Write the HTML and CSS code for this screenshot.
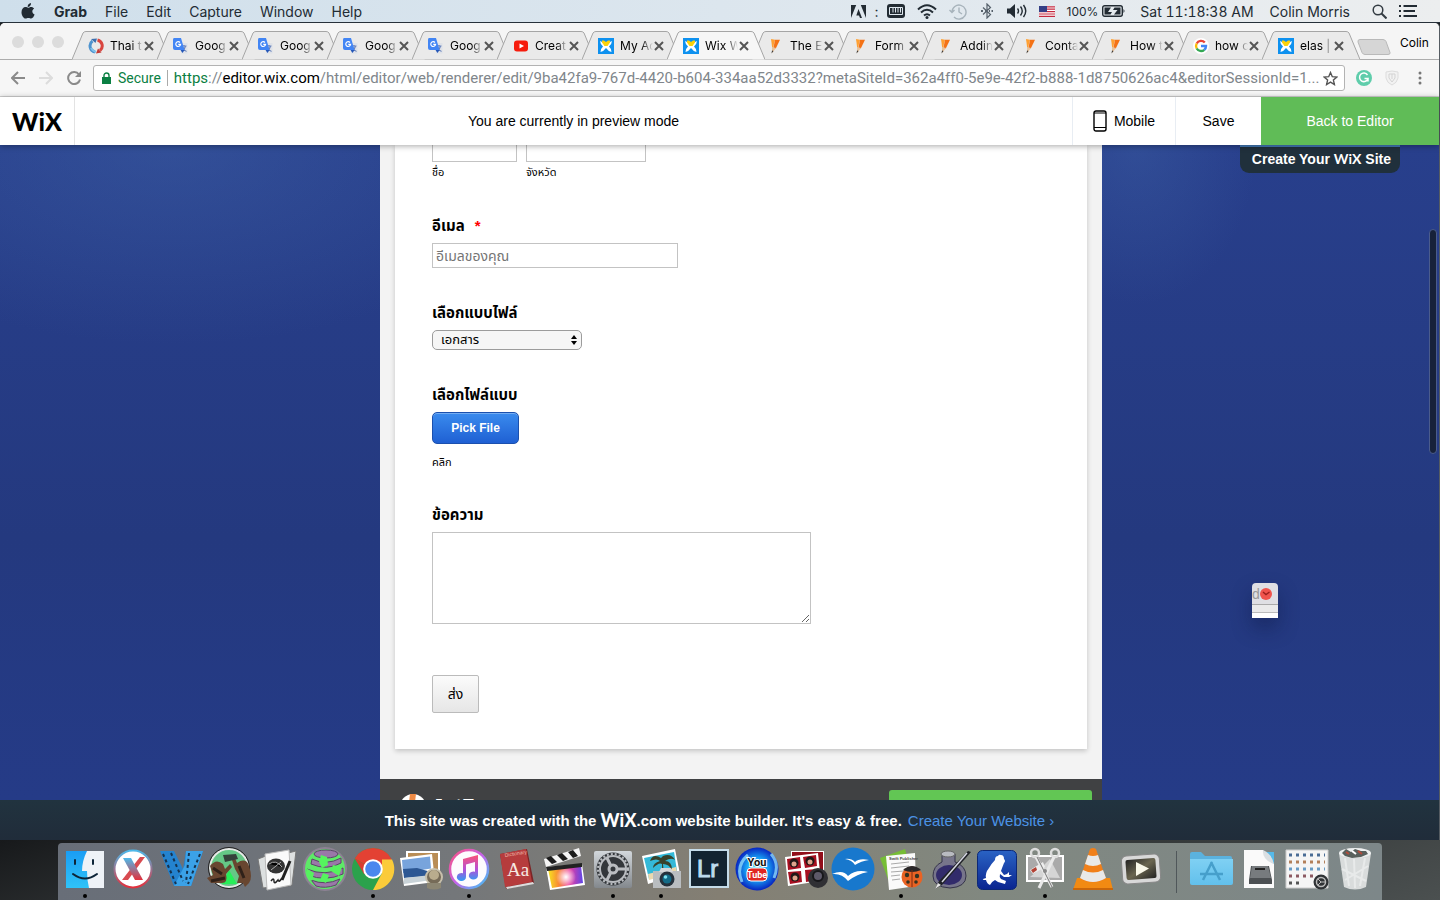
FILE: index.html
```html
<!DOCTYPE html>
<html lang="en">
<head>
<meta charset="utf-8">
<title>Wix Website Editor</title>
<link rel="stylesheet" href="styles.css">
</head>
<body>
<svg class="defs" aria-hidden="true">
  <defs>
    <linearGradient id="gBlue" x1="0" y1="0" x2="0" y2="1"><stop offset="0" stop-color="#1a9df4"/><stop offset="1" stop-color="#2fc3f8"/></linearGradient>
    <linearGradient id="gX" x1="0" y1="0" x2="0" y2="1"><stop offset="0" stop-color="#4db9ea"/><stop offset="1" stop-color="#e3303c"/></linearGradient>
    <linearGradient id="gNote" x1="0" y1="0" x2="0" y2="1"><stop offset="0" stop-color="#fb5475"/><stop offset=".55" stop-color="#b54fd8"/><stop offset="1" stop-color="#2f9df5"/></linearGradient>
    <linearGradient id="gRing" x1="0" y1="0" x2="1" y2="1"><stop offset="0" stop-color="#fb4f7e"/><stop offset=".5" stop-color="#c564ea"/><stop offset="1" stop-color="#35c9f5"/></linearGradient>
    <linearGradient id="gRain" x1="0" y1="0" x2="1" y2="0"><stop offset="0" stop-color="#f7e51f"/><stop offset=".3" stop-color="#f98b35"/><stop offset=".6" stop-color="#ee3e9c"/><stop offset="1" stop-color="#5d46e8"/></linearGradient>
    <radialGradient id="gGlow"><stop offset="0" stop-color="#fff"/><stop offset="1" stop-color="#fff" stop-opacity="0"/></radialGradient>
    <linearGradient id="gMetal" x1="0" y1="0" x2="0" y2="1"><stop offset="0" stop-color="#d3d8dc"/><stop offset="1" stop-color="#83888d"/></linearGradient>
    <radialGradient id="gTube"><stop offset="0" stop-color="#6ff0ff"/><stop offset=".5" stop-color="#18a3f5"/><stop offset="1" stop-color="#0724c0"/></radialGradient>
    <linearGradient id="gFolder" x1="0" y1="0" x2="0" y2="1"><stop offset="0" stop-color="#7fd0f3"/><stop offset="1" stop-color="#62c0ec"/></linearGradient>
    <linearGradient id="gFrog" x1="0" y1="0" x2="0" y2="1"><stop offset="0" stop-color="#2a63c4"/><stop offset="1" stop-color="#0a2590"/></linearGradient>
    <linearGradient id="gPlay" x1="0" y1="0" x2="1" y2="1"><stop offset="0" stop-color="#222"/><stop offset=".5" stop-color="#6b6650"/><stop offset="1" stop-color="#222"/></linearGradient>
    <symbol id="shape" viewBox="0 0 98 29"><path d="M0 28.500L11 2Q12 .5 14 .5H84Q86 .5 87 2L98 28.500"/></symbol>
    <symbol id="close" viewBox="0 0 10 10"><path d="M1 1l8 8M9 1L1 9" stroke="#555" stroke-width="2" fill="none"/></symbol>
    <symbol id="f-translate" viewBox="0 0 16 16"><path d="M8 5h6.500v10.500H8z" fill="#dfe2e8"/><path d="M8.500 8h5M11 7v1.500M12.500 8q-1 4-3.500 5.500M10 9.500q1 3 3.500 4" stroke="#6883bd" stroke-width="1.200" fill="none"/><path d="M1 0h7l3.500 12H2Q0 12 0 10V1.500Q0 0 1 0z" fill="#4285f4"/><path d="M7.500 12h4l-2 3z" fill="#2457b8"/><path d="M7 4.500A2.400 2.400 0 1 0 7.600 6.300H5.300" stroke="#fff" stroke-width="1.200" fill="none"/></symbol>
    <symbol id="f-thai" viewBox="0 0 16 16"><path d="M9.500 2A6 6 0 0 1 12 12.500" stroke="#d9453f" stroke-width="3" fill="none"/><path d="M7 14A6.200 6.200 0 0 1 4.500 3" stroke="#4d93cf" stroke-width="3" fill="none"/><path d="M3 1l6-.5L7.500 5z" fill="#3c6fae"/><path d="M13.500 14.500L8 15.500l2-5z" fill="#c23a35"/><path d="M3 10q1.500 3 5 4" stroke="#7fc1ea" stroke-width="2" fill="none"/></symbol>
    <symbol id="f-yt" viewBox="0 0 16 16"><rect x="1" y="2.500" width="14" height="11" rx="3" fill="#f61c0d"/><path d="M6.500 5.500v5L11 8z" fill="#fff"/></symbol>
    <symbol id="f-wix" viewBox="0 0 16 16"><path d="M0 0h16v16H0z" fill="#0e91ef"/><path d="M2 3q3 1 4 3h4q1-2 4-3-.5 4-3 5.500 2 1.500 2.500 5.500-3-.5-5.500-4Q5.500 13.500 2.500 14 3 10 5 8.500 2.500 7 2 3z" fill="#fff"/><path d="M4 2.500h2l2 1.500 2-1.500h2v2L9.500 8h-3L4 4.500z" fill="#fcd20b"/></symbol>
    <symbol id="f-pencil" viewBox="0 0 16 16"><path d="M3 1l4 .8L4.500 12z" fill="#ffa032"/><path d="M7 1.800h5L8 10 5 12z" fill="#f47216"/><path d="M4 9l4 1-4 5z" fill="#e8c39c"/><path d="M4 12.500l1.500.5-2 2.500z" fill="#333"/></symbol>
    <symbol id="f-google" viewBox="0 0 16 16"><circle cx="8" cy="8" r="8" fill="#fff"/><g fill="none" stroke-width="2.400"><path d="M11.800 4.500A5 5 0 0 0 3.700 5.500" stroke="#ea4335"/><path d="M3.700 5.500a5 5 0 0 0 0 5" stroke="#fbbc05"/><path d="M3.700 10.500a5 5 0 0 0 7.600 1.300" stroke="#34a853"/><path d="M11.300 11.800A5 5 0 0 0 13 8H8" stroke="#4285f4"/></g></symbol>
  </defs>
</svg>

<header class="menubar">
  <nav class="menus">
    <svg class="apple" viewBox="0 0 14 16"><path d="M10 0q.2 1.500-.8 2.700T6.700 3.900Q6.500 2.400 7.500 1.300T10 0zM7.200 4.800c.8 0 1.500-.8 2.900-.8 1.300 0 2.300.6 3 1.600-2.600 1.600-2.200 4.900.5 6-.6 1.700-1.900 4-3.400 4-1 0-1.500-.6-2.800-.6s-1.800.6-2.800.6C2.400 15.600.5 12.400.5 9.300c0-3.200 1.900-5.200 4-5.200 1.200 0 1.900.7 2.700.7z"/></svg>
    <b>Grab</b><span>File</span><span>Edit</span><span>Capture</span><span>Window</span><span>Help</span>
  </nav>
  <div class="status">
    <svg width="15" height="13" viewBox="0 0 15 13"><path d="M0 0h5.200L0 13zM9.800 0H15v13zM7.500 4L11 13H9L8 10.500H5.300z"/></svg>
    <span class="dots">:</span>
    <svg width="18" height="14" viewBox="0 0 18 14"><rect width="18" height="14" rx="3"/><path d="M2.500 3.500v7h13v-7zM6 4v4.500M8.500 4v4.500M11 4v4.500M13.500 4v4.500" stroke="#dfe8ef" fill="none"/></svg>
    <svg width="20" height="15" viewBox="0 0 20 15"><g fill="none" stroke="#222b33" stroke-width="2"><path d="M1 5.500Q10-3 19 5.500M4 8.500q6-5.500 12 0M7 11.500q3-2.500 6 0"/></g><circle cx="10" cy="13.500" r="1.500"/></svg>
    <svg width="18" height="17" viewBox="0 0 18 17" fill="none" stroke="#a7b3bb" stroke-width="1.400"><path d="M3 9a7 7 0 1 1 2 5M10 4.500V9l3 2M.5 7L3 9.500 5.500 7"/></svg>
    <svg class="bt" width="12" height="16" viewBox="0 0 12 16" fill="none" stroke="#56616b" stroke-width="1.200"><path d="M2 4.500l7.500 7L6 15V1l3.500 3.500-7.500 7"/><path d="M0 8h2M4 8h1M8 8h1M10.500 8H12" stroke-width="2"/></svg>
    <svg width="20" height="14" viewBox="0 0 20 14"><path d="M0 4.500h3L8 0v14L3 9.500H0z"/><path d="M10.500 4.500q2 2.500 0 5M13.500 2.500q3.500 4.500 0 9M16.500 1q4.500 6 0 12" fill="none" stroke="#222b33" stroke-width="1.400"/></svg>
    <svg width="16" height="11" viewBox="0 0 16 11"><path d="M0 0h16v11H0z" fill="#fff"/><path d="M0 .8h16M0 3.200h16M0 5.600h16M0 8h16M0 10.400h16" stroke="#c4293f" stroke-width="1.200"/><path d="M0 0h8v6H0z" fill="#343f86"/></svg>
    <span class="pct">100%</span>
    <svg width="24" height="12" viewBox="0 0 24 12"><rect x=".7" y=".7" width="19.600" height="10.600" rx="2" fill="none" stroke="#222b33" stroke-width="1.400"/><path d="M2.500 2.500H9L6 7h4L8.500 9.500h-6zM12.500 2.500h6v7H12L15.500 5H11zM21.500 4q2 2 0 4z"/></svg>
    <span class="clock">Sat 11:18:38 AM</span>
    <span class="user">Colin Morris</span>
    <svg width="15" height="15" viewBox="0 0 15 15" fill="none" stroke="#333b42" stroke-width="1.500"><circle cx="6" cy="6" r="4.800"/><path d="M9.500 9.500l5 5" stroke-width="2"/></svg>
    <svg width="18" height="12" viewBox="0 0 18 12"><path d="M0 1h2M4.500 1H18M0 6h2M4.500 6H16M0 11h2M4.500 11H18" stroke="#222b33" stroke-width="1.800"/></svg>
  </div>
</header>

<main class="window">
  <div class="tabstrip">
    <div class="lights"><i></i><i></i><i></i></div>
    <ul class="tabs">
      <li class="tab"><svg class="shape"><use href="#shape"/></svg><svg class="fav"><use href="#f-thai"/></svg><span>Thai t</span><button aria-label="Close"><svg><use href="#close"/></svg></button></li>
      <li class="tab"><svg class="shape"><use href="#shape"/></svg><svg class="fav"><use href="#f-translate"/></svg><span>Goog</span><button aria-label="Close"><svg><use href="#close"/></svg></button></li>
      <li class="tab"><svg class="shape"><use href="#shape"/></svg><svg class="fav"><use href="#f-translate"/></svg><span>Goog</span><button aria-label="Close"><svg><use href="#close"/></svg></button></li>
      <li class="tab"><svg class="shape"><use href="#shape"/></svg><svg class="fav"><use href="#f-translate"/></svg><span>Goog</span><button aria-label="Close"><svg><use href="#close"/></svg></button></li>
      <li class="tab"><svg class="shape"><use href="#shape"/></svg><svg class="fav"><use href="#f-translate"/></svg><span>Goog</span><button aria-label="Close"><svg><use href="#close"/></svg></button></li>
      <li class="tab"><svg class="shape"><use href="#shape"/></svg><svg class="fav"><use href="#f-yt"/></svg><span>Creat</span><button aria-label="Close"><svg><use href="#close"/></svg></button></li>
      <li class="tab"><svg class="shape"><use href="#shape"/></svg><svg class="fav"><use href="#f-wix"/></svg><span>My Ac</span><button aria-label="Close"><svg><use href="#close"/></svg></button></li>
      <li class="tab active"><svg class="shape"><use href="#shape"/></svg><svg class="fav"><use href="#f-wix"/></svg><span>Wix W</span><button aria-label="Close"><svg><use href="#close"/></svg></button></li>
      <li class="tab"><svg class="shape"><use href="#shape"/></svg><svg class="fav"><use href="#f-pencil"/></svg><span>The E</span><button aria-label="Close"><svg><use href="#close"/></svg></button></li>
      <li class="tab"><svg class="shape"><use href="#shape"/></svg><svg class="fav"><use href="#f-pencil"/></svg><span>Form</span><button aria-label="Close"><svg><use href="#close"/></svg></button></li>
      <li class="tab"><svg class="shape"><use href="#shape"/></svg><svg class="fav"><use href="#f-pencil"/></svg><span>Addin</span><button aria-label="Close"><svg><use href="#close"/></svg></button></li>
      <li class="tab"><svg class="shape"><use href="#shape"/></svg><svg class="fav"><use href="#f-pencil"/></svg><span>Conta</span><button aria-label="Close"><svg><use href="#close"/></svg></button></li>
      <li class="tab"><svg class="shape"><use href="#shape"/></svg><svg class="fav"><use href="#f-pencil"/></svg><span>How t</span><button aria-label="Close"><svg><use href="#close"/></svg></button></li>
      <li class="tab"><svg class="shape"><use href="#shape"/></svg><svg class="fav"><use href="#f-google"/></svg><span>how c</span><button aria-label="Close"><svg><use href="#close"/></svg></button></li>
      <li class="tab"><svg class="shape"><use href="#shape"/></svg><svg class="fav"><use href="#f-wix"/></svg><span>elas |</span><button aria-label="Close"><svg><use href="#close"/></svg></button></li>
    </ul>
    <button class="newtab" aria-label="New tab"><svg width="34" height="16" viewBox="0 0 34 16"><path d="M3 .5h23q2 0 3 2l4 11q.5 2-2 2H8q-2 0-3-2L1 3Q.5.5 3 .5z" fill="#d6d6d6" stroke="#b9b9b9"/></svg></button>
    <span class="profile">Colin</span>
  </div>

  <div class="toolbar">
    <button aria-label="Back"><svg width="14" height="14" viewBox="0 0 14 14"><path d="M14 7H1.500M7 1L1 7l6 6" stroke="#8a8a8a"/></svg></button>
    <button aria-label="Forward"><svg width="14" height="14" viewBox="0 0 14 14"><path d="M0 7h12.500M7 1l6 6-6 6" stroke="#dcdcdc"/></svg></button>
    <button aria-label="Reload"><svg width="14" height="14" viewBox="0 0 14 14"><path d="M12 3.500A6 6 0 1 0 13 8.500" stroke="#8a8a8a"/><path d="M14 0v6H8z" fill="#8a8a8a"/></svg></button>
    <div class="omnibox">
      <svg width="9" height="12" viewBox="0 0 9 12"><path d="M0 5h9v7H0z" fill="#0b8043"/><path d="M2 5V3.500a2.500 2.500 0 0 1 5 0V5" fill="none" stroke="#0b8043" stroke-width="1.400"/></svg>
      <span class="secure">Secure</span>
      <span class="url"><span class="scheme">https</span>://<b>editor.wix.com</b>/html/editor/web/renderer/edit/9ba42fa9-767d-4420-b604-334aa52d3332?metaSiteId=362a4ff0-5e9e-42f2-b888-1d8750626ac4&amp;editorSessionId=1...</span>
      <button aria-label="Bookmark"><svg width="15" height="15" viewBox="0 0 15 15"><path d="M7.500 1.500l1.800 4.200 4.500.4-3.400 3 1 4.400-3.900-2.400-3.900 2.400 1-4.400-3.400-3 4.500-.4z" stroke="#555" stroke-width="1.400"/></svg></button>
    </div>
    <div class="ext">
      <svg width="16" height="16" viewBox="0 0 16 16"><circle cx="8" cy="8" r="8" fill="#5fcdab"/><path d="M11.500 5A4.300 4.300 0 1 0 12 8.500H8.500M12 8v3.500" stroke="#fff" stroke-width="1.500"/></svg>
      <svg width="14" height="16" viewBox="0 0 14 16"><path d="M1 2l6-1 6 1v6q-1 5-6 7-5-2-6-7z" fill="#f2f2f2" stroke="#dcdcdc" stroke-width="1"/><path d="M4 4h6v4l-3 4-3-4zM7 4v5" stroke="#d3d3d3" stroke-width="1"/></svg>
      <button aria-label="Menu"><svg width="4" height="14" viewBox="0 0 4 14"><g fill="#777"><circle cx="2" cy="2" r="1.500"/><circle cx="2" cy="7" r="1.500"/><circle cx="2" cy="12" r="1.500"/></g></svg></button>
    </div>
  </div>

  <div class="wixbar">
    <a class="logo" href="#">WiX</a>
    <p>You are currently in preview mode</p>
    <button class="mobile"><svg width="14" height="22" viewBox="0 0 14 22"><rect x="1" y="1" width="12" height="20" rx="2" fill="none" stroke="#000" stroke-width="1.400"/><path d="M1 3h12M1 17.500h12" stroke="#000"/></svg>Mobile</button>
    <button class="save">Save</button>
    <button class="back">Back to Editor</button>
  </div>

  <section class="stage">
    <div class="page">
      <form class="card" lang="th">
        <div class="names">
          <label class="first"><input type="text"><small>ชื่อ</small></label>
          <label class="last"><input type="text"><small>จังหวัด</small></label>
        </div>
        <div class="field"><label for="mail">อีเมล <em>*</em></label><input id="mail" type="email" placeholder="อีเมลของคุณ"></div>
        <div class="field"><label for="kind">เลือกแบบไฟล์</label>
          <div class="pick"><select id="kind"><option>เอกสาร</option></select><svg width="6" height="10" viewBox="0 0 6 10"><path d="M0 4l3-4 3 4zM0 6h6l-3 4z"/></svg></div></div>
        <div class="field"><label for="file">เลือกไฟล์แบบ</label><button id="file" class="file" type="button">Pick File</button><small>คลิก</small></div>
        <div class="field"><label for="msg">ข้อความ</label><textarea id="msg"></textarea></div>
        <button class="send" type="button">ส่ง</button>
      </form>
      <div class="brand">
        <svg width="26" height="26" viewBox="0 0 26 26"><circle cx="13" cy="13" r="13" fill="#fff"/><path d="M10 0h6l-3 24H7z" fill="#ef8b46"/></svg>
        <strong>JotForm</strong>
        <a href="#" aria-label="Create form"></a>
      </div>
    </div>
    <a class="badge" href="#">Create Your <span>WiX</span> Site</a>
    <div class="mini"><div>d<svg width="12" height="12" viewBox="0 0 12 12"><circle cx="6" cy="6" r="6" fill="#f0544c"/><path d="M3 4l3 2.500L9.500 4" stroke="#9c1f1c" stroke-width="1.400" fill="none"/></svg></div></div>
    <div class="thumb"></div>
  </section>

  <footer class="promo">This site was created with the&nbsp;<b>WiX</b>.com website builder. It's easy &amp; free.<a href="#">Create Your Website ›</a></footer>
</main>

<div class="desk">
  <div class="dock">
    <div class="app on"><svg viewBox="0 0 48 48"><path d="M5 5h38v37H5z" fill="#eef2f7"/><path d="M5 5h21q-5 10-5 20h5q0 9 2 17H5z" fill="url(#gBlue)"/><path d="M14 14v4M32 14v4M12 28q12 9 24 0" fill="none" stroke="#0d2438" stroke-width="2" stroke-linecap="round"/></svg></div>
    <div class="app"><svg viewBox="0 0 48 48"><circle cx="24" cy="23" r="18.500" fill="#fff" stroke="url(#gX)" stroke-width="2"/><path d="M31 11h5L19 34h-6z" fill="#d84a50"/><path d="M14 12h8l12 22h-8z" fill="url(#gX)"/></svg></div>
    <div class="app"><svg viewBox="0 0 48 48"><path d="M3 5h14l9 18 3-18h17L34 40H17z" fill="#2483cf"/><path d="M17 40L28 19l1-14h17L34 40z" fill="#3ba2e8"/><path d="M6 8l13 30M14 7l12 28M32 7l-3 30M43 8L31 38" stroke="#15324e" stroke-width="2" stroke-dasharray="3 3" fill="none"/></svg></div>
    <div class="app"><svg viewBox="0 0 48 48"><circle cx="24" cy="22" r="19" fill="#65c886" stroke="#e5e9e5" stroke-width="2"/><circle cx="24" cy="22" r="20.500" fill="none" stroke="#222"/><path d="M17 38l7-14 8 14z" fill="#27ee58"/><path d="M5 20q6-8 13-2l2 5 5-5 2 3-6 7q2 9-4 9H6l-4-5 6-3zM32 17q9-6 12 3 4 12 0 17l-4 4-2-4h-6l2-7-4-7-3-9 3-2z" fill="#684630"/><path d="M18 9l13-1 2 5-13 3z" fill="#35423b"/><path d="M6 35l14-3M34 20l5 12M8 22l9 6" stroke="#2f2119" stroke-width="3"/></svg></div>
    <div class="app"><svg viewBox="0 0 48 48"><path d="M5 13L18 8l9 32-17 2zM31 8l12-3-4 34-8 2z" fill="#dde0e0" stroke="#777"/><path d="M12 8l24-4 2 35-24 5z" fill="#fafafa" stroke="#bbb"/><ellipse cx="23" cy="20" rx="9" ry="7.500" fill="#333"/><path d="M16 18q7-5 13 3M18 24l10-8" stroke="#aaa" stroke-width="1"/><path d="M37 15L29 34" stroke="#222" stroke-width="3"/><path d="M18 35q3-4 3 0t4-1q1 3 4-2" stroke="#222" stroke-width="1.500" fill="none"/></svg></div>
    <div class="app"><svg viewBox="0 0 48 48"><circle cx="24" cy="23" r="22" fill="#8d8294"/><circle cx="24" cy="23" r="20" fill="#5eea68"/><g fill="#9a78a8" stroke="#5d4468"><ellipse cx="25" cy="8" rx="12" ry="4"/><path d="M11 13q14 7 29-1v5q-14 8-30 1zM6 23q18 8 36-1v6q-18 8-35 1zM10 34q14 6 29-1l-4 6q-11 4-20 1z"/></g><path d="M20 9l6 2 1 8-6 3-3-6zM32 19l9 2-3 9-8-5zM5 22l8 5-2 8-5-5zM22 27l6 2-3 8-6-3z" fill="#55f45e"/></svg></div>
    <div class="app on"><svg viewBox="0 0 48 48"><circle cx="24" cy="23" r="21" fill="#2ba24c"/><path d="M5.800 12.500A21 21 0 0 1 42.200 12.500L45 23H24z" fill="#e34133"/><path d="M43 13.500A21 21 0 0 1 24 44L33 27V13.500z" fill="#fbcb3a"/><path d="M5.800 12.500L15 28l9-5z" fill="#d93c30"/><circle cx="24" cy="23" r="9.800" fill="#fff"/><circle cx="24" cy="23" r="7.800" fill="#4a87ee"/></svg></div>
    <div class="app"><svg viewBox="0 0 48 48"><path d="M9 5h34v28H9z" fill="#fff"/><path d="M11 7h30v24H11z" fill="#b98d55"/><path d="M3 12l32-4 3 28-31 4z" fill="#fff"/><path d="M5 14l28-3.500 1 12L6 27z" fill="#78a4dc"/><path d="M6 23l14-1 14 4v4L7 32z" fill="#2c5793"/><path d="M7 32l27-3 1 5-28 4z" fill="#c9d3d8"/><circle cx="37" cy="31" r="8" fill="#766b58" stroke="#c7c0ac" stroke-width="2"/><circle cx="37" cy="29" r="5" fill="#b9ac8d"/><path d="M30 37h14v5q-7 3-14 0z" fill="#8c8673"/></svg></div>
    <div class="app on"><svg viewBox="0 0 48 48"><circle cx="24" cy="23" r="19" fill="#fdfbfe" stroke="url(#gRing)" stroke-width="2.500"/><path d="M18 13l15-4v20.500a4.600 4 0 1 1-3-3.700V16l-9 2.500V31a4.600 4 0 1 1-3-3.700z" fill="url(#gNote)"/></svg></div>
    <div class="app"><svg viewBox="0 0 48 48"><path d="M7 8l27-5 7 34-28 6z" fill="#7d2425"/><path d="M7 8l26-5 6 33-27 5z" fill="#b63c3d"/><path d="M13 41l27-5 1 2-27 5z" fill="#ddd"/><text x="14" y="30" class="serif" font-size="19" fill="#f6e9e2">Aa</text><text x="12" y="11" font-size="5" fill="#eba" transform="rotate(-9 12 11)">Dictionary</text></svg></div>
    <div class="app"><svg viewBox="0 0 48 48"><path d="M5 21l36-3 3 21-35 5z" fill="#fff"/><path d="M7 23l33-3 2 17-31 5z" fill="url(#gRain)"/><circle cx="25" cy="31" r="10" fill="url(#gGlow)"/><path d="M3 13L38 2l2 8L5 21z" fill="#f4f4f4"/><path d="M5 12l6 6 5-2-6-6zM16 9l6 6 5-2-6-6zM27 6l5 6 5-2-5-6z" fill="#1c1c1c"/><path d="M5 21l36-4v4L6 25z" fill="#222"/></svg></div>
    <div class="app on"><svg viewBox="0 0 48 48"><rect x="5" y="5" width="38" height="37" rx="2" fill="url(#gMetal)"/><circle cx="24" cy="23" r="16.500" fill="#33373b"/><circle cx="24" cy="23" r="13" fill="none" stroke="#b9bcc0" stroke-width="2"/><circle cx="24" cy="23" r="15" fill="none" stroke="#b9bcc0" stroke-width="2" stroke-dasharray="2 2"/><circle cx="24" cy="23" r="4" fill="none" stroke="#b9bcc0" stroke-width="3"/><path d="M28 23h9M22 26l-4 8M22 20l-4-8" stroke="#b9bcc0" stroke-width="3"/></svg></div>
    <div class="app on"><svg viewBox="0 0 48 48"><path d="M5 10l33-7 5 25-32 10z" fill="#fff"/><path d="M7 12l30-6 3 19-28 8z" fill="#34b9d8"/><path d="M11 28l28-7 1 5-28 8z" fill="#ead9af"/><path d="M24 12q-8-5-11 3 7-3 10 0-7 2-7 7 6-6 9-4v11h2l-1-11q6 0 9 6 0-9-7-9 6-4 10-1-4-7-12-4z" fill="#38422b"/><path d="M16 25h28v17H16z" fill="#b9bdc0"/><path d="M24 22h10l2 4H22z" fill="#d4d6d8"/><circle cx="30" cy="33" r="7.500" fill="#25313b"/><circle cx="30" cy="33" r="4.500" fill="#146b87"/><circle cx="28.500" cy="31" r="1.800" fill="#7de3ef"/></svg></div>
    <div class="app"><svg viewBox="0 0 48 48"><path d="M5 4h38v37H5z" fill="#132431" stroke="#c5dce9" stroke-width="2"/><text x="12" y="31" class="sans" font-size="24" fill="#bddcee" stroke="#bddcee">Lr</text></svg></div>
    <div class="app"><svg viewBox="0 0 48 48"><circle cx="24" cy="23" r="21.500" fill="url(#gTube)"/><path d="M9 36Q2 20 15 9M38 8q9 10 3 24" stroke="#9fecff" stroke-width="3" fill="none" opacity=".7"/><rect x="14" y="22" width="20" height="13" rx="4" fill="#e02623" stroke="#fff"/><text x="24" y="20" class="narrow" font-size="11" text-anchor="middle" fill="#111" stroke="#fff" stroke-width="2" paint-order="stroke">You</text><text x="24" y="32" class="narrow" font-size="9" text-anchor="middle" fill="#fff">Tube</text></svg></div>
    <div class="app"><svg viewBox="0 0 48 48"><path d="M10 5h33v27H10z" fill="#fff"/><path d="M11 6h31v25H11z" fill="#920e1a"/><path d="M4 11l33-4 3 28-33 5z" fill="#fff"/><path d="M6 13l13-2 1 11-13 2zM22 11l13-2 1 11-12 2zM7 26l13-1 1 11-12 2zM24 24l12-1v11l-11 2z" fill="#a70f20"/><g fill="#221818"><circle cx="13" cy="17" r="4.500"/><circle cx="29" cy="15" r="4.500"/><circle cx="14" cy="31" r="4.500"/></g><g fill="#dfa48c"><circle cx="13" cy="18" r="2.500"/><circle cx="29" cy="16" r="2.500"/><circle cx="14" cy="32" r="2.500"/></g><circle cx="37" cy="32" r="10" fill="#303034"/><circle cx="37" cy="30" r="5" fill="#5d5969" stroke="#17171a" stroke-width="2"/></svg></div>
    <div class="app"><svg viewBox="0 0 48 48"><circle cx="24" cy="23" r="21.500" fill="#1878cd"/><path d="M16 13q6-1 10 3 4-4 14-2-8 1-14 5-3-5-10-6zM3 28q11-5 16 2 8-7 20-4-11 2-20 9-6-8-16-7z" fill="#fff"/></svg></div>
    <div class="app on"><svg viewBox="0 0 48 48"><path d="M3 12l25-9 8 28-22 10z" fill="#76bd36"/><path d="M9 10l29-3 1 33-27 4z" fill="#fafafa"/><text x="12" y="14" class="sans" font-size="4" font-weight="700" fill="#444">Swift Publisher</text><path d="M14 18l18-2M14 22l18-2M14 26l13-1M14 30l9-1M15 34l8-1" stroke="#aaa"/><circle cx="35" cy="31" r="10.500" fill="#e96324"/><path d="M26 24q9-8 18 0-9 4-18 0z" fill="#292728"/><path d="M35 24v17" stroke="#7d2b10"/><g fill="#332"><circle cx="30" cy="29" r="2.200"/><circle cx="40" cy="30" r="2.200"/><circle cx="31" cy="36" r="1.800"/><circle cx="39" cy="36" r="1.800"/></g></svg></div>
    <div class="app"><svg viewBox="0 0 48 48"><path d="M17 8h13v8q11 4 11 14 0 11-16 12Q8 41 8 30q0-10 9-14z" fill="#77758b" stroke="#35344a"/><ellipse cx="24" cy="29" rx="13" ry="10" fill="#322b6b"/><ellipse cx="23" cy="8" rx="7" ry="3" fill="#b9bbc1" stroke="#666"/><path d="M43 5l3 1L17 39l-7 4 4-8z" fill="#202228"/><path d="M42 7L17 36" stroke="#d6d7e2" stroke-width="1.500"/><path d="M10 43l3-6 3 2z" fill="#e6e6e6"/></svg></div>
    <div class="app"><svg viewBox="0 0 48 48"><rect x="4.500" y="4.500" width="39" height="39" rx="5" fill="url(#gFrog)" stroke="#0c2877"/><path d="M22 14q0-4 3-4 1-2 3-1 3 0 3 4 2 2 0 4-2 5-3 8l3 4 3-1 2-2v3l3 0-3 2h-5l-4-3q-1 3 1 5l5 2-1 3-7-2-3-2q-4 2-5 5-3-1-4-5-4 0-3-1l3-1q-1-5 3-10 3-5 6-8z" fill="#fff"/></svg></div>
    <div class="app on"><svg viewBox="0 0 48 48"><path d="M5 9h38v27H5z" fill="#fff"/><path d="M7 11h34v23H7z" fill="#aaa"/><path d="M9 31l12-10 8-8 10 19z" fill="#d5d5d5"/><path d="M9 24l13-8 2 5-12 7z" fill="#eee"/><path d="M10 24l5-3 1 3-4 3z" fill="#b34234"/><g fill="none" stroke="#ddd" stroke-width="2.500"><circle cx="14" cy="7" r="4"/><circle cx="34" cy="7" r="4"/></g><path d="M15 11l16 30M33 11L18 42" stroke="#e9e9e9" stroke-width="3"/><path d="M16 11l15 30" stroke="#777"/><circle cx="24" cy="25" r="2" fill="#888"/></svg></div>
    <div class="app"><svg viewBox="0 0 48 48"><path d="M8 32h33l3 12H4z" fill="#f28a12"/><path d="M4 42h40v2H4z" fill="#c9660a"/><path d="M21 3q3-2 6 0l10 30q-13 7-26 0z" fill="#f1801a"/><path d="M19 9l-3 9q8 4 16 0l-3-9q-5 2-10 0zM14 24l-3 8q13 8 26 0l-3-8q-10 5-20 0z" fill="#e9e9e9"/></svg></div>
    <div class="app"><svg viewBox="0 0 48 48"><rect x="5" y="9" width="38" height="28" rx="5" fill="#d8d8d8" stroke="#888" transform="rotate(-4 24 23)"/><rect x="9" y="13" width="30" height="20" rx="2" fill="url(#gPlay)" transform="rotate(-4 24 23)"/><path d="M19 16l13 6.500L19 30z" fill="#faf8e9"/></svg></div>
    <hr>
    <div class="app"><svg viewBox="0 0 48 48"><path d="M3 8q0-2 2-2h9l4 4h25q2 0 2 2v4H3z" fill="#5bb2de"/><path d="M3 13h43v24q0 2-2 2H5q-2 0-2-2z" fill="url(#gFolder)"/><path d="M24 16l9 18M25 16l-9 18M13 28h23" stroke="#469fcb" stroke-width="2.500" fill="none"/></svg></div>
    <div class="app"><svg viewBox="0 0 48 48"><path d="M28 6h11v14H28z" fill="#55b9e9"/><path d="M9 4h19q2 8 11 14v24H9z" fill="#fafafa"/><path d="M28 4q-1 10 11 14-2-10-11-14z" fill="#dadfe2"/><path d="M16 20h18l3 14v4H14v-4z" fill="#4c5053"/><path d="M17 20h16l3 12H15z" fill="#777b7e"/><path d="M20 23h10" stroke="#222" stroke-width="2"/></svg></div>
    <div class="app"><svg viewBox="0 0 48 48"><path d="M3 4h42v38H3z" fill="#f5f5f5" stroke="#ccc"/><g fill="none" stroke-width="3" stroke-dasharray="3 4"><path d="M6 9h36" stroke="#4a6c95"/><path d="M6 16h36" stroke="#b3805a"/><path d="M6 23h36" stroke="#689bc4"/><path d="M6 30h24" stroke="#8c5a62"/><path d="M6 37h12" stroke="#555"/></g><circle cx="38" cy="36" r="7.500" fill="#2f3235"/><circle cx="38" cy="36" r="4.500" fill="none" stroke="#bbb" stroke-width="1.500"/><path d="M38 36l4 0M38 36l-3-3M38 36l-3 3" stroke="#bbb"/></svg></div>
    <div class="app"><svg viewBox="0 0 48 48"><path d="M8 7h32l-5 34q-11 5-22 0z" fill="#d9dcdc"/><path d="M14 12l4 28M34 12l-5 28M23 13l1 29M11 23l24 12M37 20L14 34" stroke="#e8eaea" stroke-width="2"/><ellipse cx="24" cy="7" rx="16" ry="5" fill="#eef0f0"/><path d="M11 7l4-4 5 3 4-3 6 2 5 0 2 3-7 3-9 1-7-2z" fill="#59605c"/><path d="M15 6l3 2M27 5l4 3" stroke="#b34b3b" stroke-width="2"/><path d="M21 5l4 3" stroke="#fff" stroke-width="2"/></svg></div>
  </div>
</div>
</body>
</html>
```
FILE: styles.css
```css
* { box-sizing: border-box; }
body {
  margin: 0;
  min-height: 100vh;
  display: flex;
  flex-direction: column;
  font-family: "Liberation Sans", Arial, sans-serif;
  font-size: 14px;
  color: #000;
  background: #1d2022;
}
button { border: 0; padding: 0; margin: 0; background: none; font: inherit; color: inherit; }
a { text-decoration: none; color: inherit; }
svg { display: block; flex: none; }
.defs { position: absolute; width: 0; height: 0; }

/* system menu bar */
.menubar {
  height: 23px;
  display: flex;
  justify-content: space-between;
  align-items: center;
  padding: 0 23px 0 21px;
  background: linear-gradient(90deg, #cfdfeb, #dce6ee 50%, #eceeef);
  border-bottom: 1px solid #27313a;
  font-family: Inter, Roboto, sans-serif;
  color: #222b33;
}
.menus { display: flex; align-items: center; gap: 18px; }
.menus b { margin-left: 1px; }
.apple { width: 14px; height: 16px; fill: #222b33; }
.status { display: flex; align-items: center; gap: 12px; fill: #222b33; white-space: nowrap; }
.status .dots { margin: 0 -4px; }
.status .pct { font-size: 12px; margin-right: -8px; }
.status .bt { margin: 0 2px; }
.status .clock { margin-left: 2px; font-variant-numeric: tabular-nums; }
.status .user { margin: 0 10px 0 4px; }

/* browser window */
.window { flex: 1; display: flex; flex-direction: column; background: #f4f4f4; border-right: 1px solid #555c62; border-radius: 5px 5px 0 0; }
.tabstrip { height: 37px; display: flex; align-items: flex-end; border-bottom: 1px solid #acacac; background: #f5f5f5; border-radius: 5px 5px 0 0; }
.lights { display: flex; gap: 8px; padding: 0 8px 11px 12px; }
.lights i { width: 12px; height: 12px; border-radius: 50%; background: #dcdcdc; }
.tabs { display: flex; list-style: none; margin: 0 0 -1px; padding: 0 13px 0 0; font: 12px/28px Inter, Roboto, sans-serif; }
.tab { width: 98px; height: 29px; margin-right: -13px; display: flex; align-items: center; padding-left: 16px; position: relative; }
.tab .shape { position: absolute; left: 0; top: 0; width: 98px; height: 29px; fill: #eaeaea; stroke: #a5a5a5; }
.tab.active { z-index: 1; }
.tab.active .shape { fill: #f6f6f6; }
.tab .fav { position: relative; width: 16px; height: 16px; }
.tab span { position: relative; width: 33px; margin-left: 6px; white-space: nowrap; -webkit-mask-image: linear-gradient(90deg, #000 65%, transparent); mask-image: linear-gradient(90deg, #000 65%, transparent); }
.tab button { position: relative; margin-left: 1px; }
.tab button svg { width: 10px; height: 10px; }
.newtab { margin: 0 9px 4px -3px; }
.profile { flex: none; font: 12px/16px Inter, Roboto, sans-serif; margin-bottom: 8px; }
.toolbar { height: 37px; display: flex; align-items: center; gap: 14px; padding: 0 17px 0 11px; border-bottom: 1px solid #cfcfcf; background: #f6f6f6; }
.toolbar svg { fill: none; stroke-width: 2; }
.omnibox { flex: 1; min-width: 0; height: 26px; display: flex; align-items: center; padding: 0 6px 0 8px; margin-left: -2px; background: #fff; border: 1px solid #b3b3b3; border-radius: 3px; font: 14px/24px Roboto, sans-serif; color: #80868b; }
.secure { color: #0b8043; margin-left: 7px; padding-right: 6px; border-right: 1px solid #aaa; line-height: 16px; }
.url { flex: 1; min-width: 0; margin-left: 6px; white-space: nowrap; overflow: hidden; font-size: 15px; }
.url b { font-weight: 400; color: #000; }
.scheme { color: #0b8043; }
.ext { display: flex; align-items: center; gap: 13px; margin-left: -3px; }
.ext button { margin-left: 6px; }

/* editor preview bar */
.wixbar { position: relative; z-index: 1; height: 48px; display: flex; background: #fff; box-shadow: 0 1px 6px rgba(0, 0, 0, .35); }
.wixbar p { flex: 1; margin: 0; text-align: center; line-height: 48px; }
.logo { width: 75px; border-right: 1px solid #e3e3e3; text-align: center; font: 900 25px/48px Lato, sans-serif; }
.mobile { width: 104px; display: flex; align-items: center; justify-content: center; gap: 7px; border-left: 1px solid #e8edf3; border-right: 1px solid #e8edf3; }
.save { width: 85px; }
.back { width: 178px; background: #60bc57; color: #fff; }

/* previewed site */
.stage {
  position: relative;
  flex: 1;
  display: grid;
  grid-template-columns: 380fr 722px 337fr;
  overflow: hidden;
  background: radial-gradient(ellipse 380px 200px at 12% 0, rgba(70, 110, 175, .35), transparent), radial-gradient(ellipse 120px 160px at 79% 0, rgba(70, 110, 175, .3), transparent), linear-gradient(#283f8c, #24397f 60%, #253b87);
}
.page { grid-column: 2; display: flex; flex-direction: column; background: #f3f3f3; }
.card { margin: 0 15px 30px; padding: 0 37px 36px; background: #fff; box-shadow: 0 2px 5px rgba(0, 0, 0, .2); display: flex; flex-direction: column; align-items: flex-start; font-family: "Liberation Sans", "Noto Sans Thai", "Loma", sans-serif; }
.card input, .card textarea { display: block; margin: 0; border: 1px solid #c3c3c3; border-radius: 0; background: #fff; font: inherit; }
.card small { display: block; font-size: 11px; line-height: 16px; }
.names { display: flex; gap: 9px; margin-bottom: 36px; }
.names input { width: 100%; height: 17px; border-top: 0; margin-bottom: 2px; }
.first { width: 85px; }
.last { width: 120px; }
.field { margin-bottom: 35px; }
.field > label { display: block; font-size: 15px; font-weight: 700; line-height: 20px; margin-bottom: 7px; }
.field em { font-style: normal; color: #f00; margin-left: 6px; }
#mail { width: 246px; height: 25px; padding: 0 3px; }
.pick { position: relative; }
.pick select { display: block; width: 150px; height: 20px; padding: 0 8px; appearance: none; border: 1px solid #9c9c9c; border-radius: 5px; background: #f6f6f6; font: 13px/18px "Liberation Sans", "Noto Sans Thai", sans-serif; color: #000; }
.pick svg { position: absolute; right: 5px; top: 5px; pointer-events: none; }
.file { display: block; width: 87px; height: 32px; margin-bottom: 10px; border: 1px solid #1b50ae; border-radius: 5px; background: linear-gradient(#3a8bee, #1f60d3); color: #fff; font-size: 12px; font-weight: 700; box-shadow: inset 0 1px 0 rgba(255, 255, 255, .3); }
.card textarea { width: 379px; height: 92px; }
.send { width: 47px; height: 38px; margin-top: 16px; border: 1px solid #bbb; border-radius: 2px; background: linear-gradient(#fbfbfb, #e6e6e6); }
.brand { flex: 1 0 21px; height: 21px; overflow: hidden; display: flex; align-items: flex-start; background: #404143; padding: 11px 10px 0 20px; color: #fff; }
.brand svg { margin-top: 4px; }
.brand strong { font-size: 20px; line-height: 24px; margin: 4px 0 0 6px; }
.brand a { width: 203px; height: 36px; margin-left: auto; border-radius: 3px; background: #62c654; }
.badge { position: absolute; top: 0; right: 39px; padding: 0 9px 2px 12px; border-top: 2px solid #4379b5; border-radius: 0 0 9px 9px; background: #20303c; color: #fff; font-weight: 700; line-height: 24px; }
.badge span, .promo b { font-family: Lato, sans-serif; }
.mini { position: absolute; right: 161px; top: 438px; width: 26px; height: 35px; border-radius: 4px 4px 0 0; background: linear-gradient(#dfdfe3 0 21px, #aaa 21px 22px, #eaeaea 22px 29px, #bbb 29px 30px, #fff 30px); box-shadow: 0 10px 20px rgba(10, 20, 60, .4); color: #999; line-height: 22px; }
.mini div { display: flex; align-items: center; }
.thumb { position: absolute; right: 2px; top: 84px; width: 8px; height: 225px; border-radius: 4px; background: #17213a; border: 1px solid #4b5c8c; }
.promo { height: 40px; display: flex; align-items: center; justify-content: center; background: linear-gradient(#21333f, #202c3a); color: #fff; font-size: 15px; font-weight: 700; }
.promo b { font-size: 18px; line-height: 24px; }
.promo a { margin-left: 6px; color: #4c93e6; font-weight: 400; }

/* dock */
.desk { height: 60px; display: flex; align-items: flex-end; justify-content: center; background: linear-gradient(160deg, #17191b, #3b3f40 30%, #2b2f30 60%, #4b5050); }
.dock { height: 57px; display: flex; padding: 3px 3px 0; border-radius: 4px 4px 0 0; background: linear-gradient(90deg, #686e78, #74777a 30%, #847f73 50%, #818880 70%, #7d8789); }
.app { width: 48px; height: 54px; position: relative; }
.app svg { width: 48px; height: 48px; }
.app.on::after { content: ""; position: absolute; left: 22px; bottom: 2px; width: 4px; height: 4px; border-radius: 50%; background: #000; }
.dock hr { width: 1px; height: 42px; margin: 5px 10px 0 11px; border: 0; background: #50575a; }
.serif { font-family: "Liberation Serif", serif; }
.sans { font-family: "Liberation Sans", sans-serif; }
.narrow { font-family: Roboto, sans-serif; font-weight: 700; }
```
